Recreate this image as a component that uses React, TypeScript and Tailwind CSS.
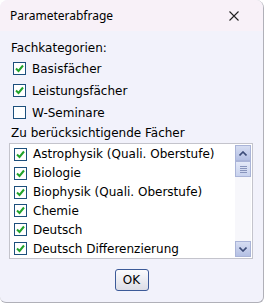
import React from "react";

const subjects = [
  "Astrophysik (Quali. Oberstufe)",
  "Biologie",
  "Biophysik (Quali. Oberstufe)",
  "Chemie",
  "Deutsch",
  "Deutsch Differenzierung",
];

function Check({ checked }: { checked: boolean }) {
  return (
    <span className="w-[13px] h-[13px] border border-[#1c4f7c] bg-white flex items-center justify-center shrink-0">
      {checked && (
        <svg width="9" height="9" viewBox="0 0 9 9">
          <path d="M1 4.5 L3.5 7 L8 1.5" fill="none" stroke="#21a32b" strokeWidth="2" />
        </svg>
      )}
    </span>
  );
}

function Row({ label, checked }: { label: string; checked: boolean }) {
  return (
    <div className="flex items-center gap-[6px] h-[19px]">
      <Check checked={checked} />
      <span>{label}</span>
    </div>
  );
}

export default function App() {
  return (
    <div className="w-[264px] h-[304px] bg-white">
      <div
        className="w-[264px] h-[303px] rounded-t-lg rounded-b-md border-r border-b border-[#b0b0b8] overflow-hidden flex flex-col bg-[#f2f2fb] text-[12px] text-black"
        style={{ fontFamily: "Tahoma, 'DejaVu Sans', sans-serif" }}
      >
        <div className="h-[31px] bg-[#f8f1f8] flex items-center justify-between pl-[10px] pr-[24px] shrink-0">
          <span className="text-[12px]" style={{ fontFamily: "'Noto Sans', sans-serif" }}>
            Parameterabfrage
          </span>
          <svg width="10" height="10" viewBox="0 0 10 10">
            <path d="M0.5 0.5 L9.5 9.5 M9.5 0.5 L0.5 9.5" stroke="#222" strokeWidth="1.1" />
          </svg>
        </div>
        <div className="flex flex-col px-[10px] pt-[9px]">
          <div className="h-[16px] leading-[16px] pl-[1px]">Fachkategorien:</div>
          <div className="flex flex-col gap-[3px] pl-[3px] mt-[3px]">
            <Row label="Basisfächer" checked />
            <Row label="Leistungsfächer" checked />
            <Row label="W-Seminare" checked={false} />
          </div>
          <div className="h-[16px] leading-[16px] pl-[1px] mt-[3px]">Zu berücksichtigende Fächer</div>
          <div className="mt-[2px] w-[244px] h-[116px] -ml-[1px] border border-[#c4c4cc] bg-white flex">
            <div className="flex-1 flex flex-col pl-[4px] pt-[1px]">
              {subjects.map((s) => (
                <Row key={s} label={s} checked />
              ))}
            </div>
            <div className="w-[16px] my-[1px] mr-[1px] bg-[#f7f7fb] flex flex-col">
              <div className="h-[16px] bg-gradient-to-b from-[#d6ddf2] to-[#b4c0e4] border border-[#aab4d8] flex items-center justify-center">
                <svg width="8" height="5" viewBox="0 0 8 5">
                  <path d="M0.5 4.5 L4 1 L7.5 4.5" fill="none" stroke="#3c4c78" strokeWidth="1.6" />
                </svg>
              </div>
              <div className="h-[16px] bg-gradient-to-b from-[#e4e9f8] to-[#c8d2ee] border border-[#aab4d8] flex flex-col items-center justify-center gap-[1px]">
                <span className="w-[7px] h-px bg-[#8894bc]" />
                <span className="w-[7px] h-px bg-[#8894bc]" />
                <span className="w-[7px] h-px bg-[#8894bc]" />
                <span className="w-[7px] h-px bg-[#8894bc]" />
              </div>
              <div className="flex-1" />
              <div className="h-[16px] bg-gradient-to-b from-[#d6ddf2] to-[#b4c0e4] border border-[#aab4d8] flex items-center justify-center">
                <svg width="8" height="5" viewBox="0 0 8 5">
                  <path d="M0.5 0.5 L4 4 L7.5 0.5" fill="none" stroke="#3c4c78" strokeWidth="1.6" />
                </svg>
              </div>
            </div>
          </div>
          <div className="flex justify-center mt-[10px]">
            <button className="w-[34px] h-[22px] rounded-[3px] border border-[#3c5a98] bg-gradient-to-b from-[#fbfbfd] to-[#dcdde6] text-[12px] leading-none">
              OK
            </button>
          </div>
        </div>
      </div>
    </div>
  );
}
